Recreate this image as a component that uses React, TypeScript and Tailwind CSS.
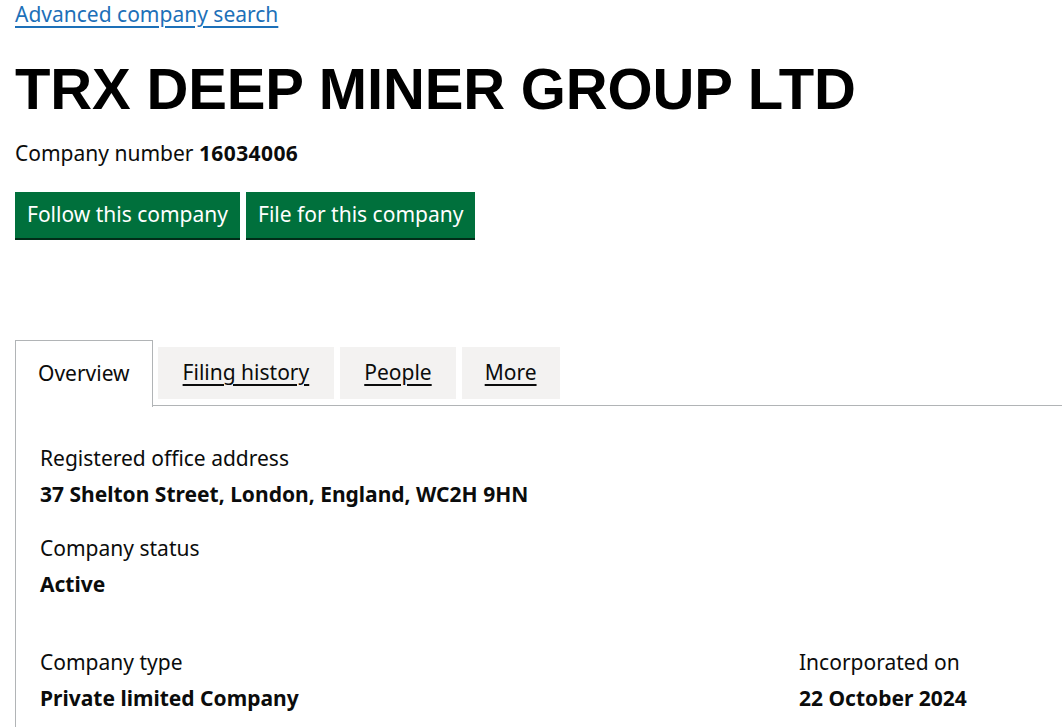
export default function App() {
  return (
    <div className="min-h-screen w-full overflow-hidden bg-white text-[#0b0c0c] font-['Noto_Sans',sans-serif]">
      <div className="pl-[15px]">
        <div className="h-[32px]">
          <a
            href="#"
            className="text-[21px] leading-[28px] text-[#1d70b8] underline decoration-[1.5px] underline-offset-[4px]"
          >
            Advanced company search
          </a>
        </div>
        <h1 className="mt-[22px] font-['Liberation_Sans',Arial,sans-serif] text-[58px] font-bold leading-[70px] tracking-[-0.15px] text-black">
          TRX DEEP MINER GROUP LTD
        </h1>
        <p className="mt-[15px] text-[21px] leading-[28px]">
          Company number <strong className="font-bold tracking-[0.4px]">16034006</strong>
        </p>
        <div className="mt-[25px] flex gap-[6px]">
          <button className="h-[46px] bg-[#00703c] px-[12px] text-[21px] text-white shadow-[0_2px_0_#002d18]">
            Follow this company
          </button>
          <button className="h-[46px] bg-[#00703c] px-[12px] text-[21px] text-white shadow-[0_2px_0_#002d18]">
            File for this company
          </button>
        </div>

        <div className="mt-[102px]">
          <div className="flex items-start">
            <div className="relative z-10 -mb-px flex h-[67px] items-center border border-b-0 border-[#b1b4b6] bg-white px-[22px] text-[21px]">
              Overview
            </div>
            <div className="flex h-[66px] flex-1 items-start gap-[6px] border-b border-[#b1b4b6] pl-[5px] pt-[7px]">
              <a href="#" className="flex h-[52px] items-center bg-[#f3f2f1] px-[25px] text-[21px] text-[#0b0c0c] underline decoration-2 underline-offset-[4px]">
                Filing history
              </a>
              <a href="#" className="flex h-[52px] items-center bg-[#f3f2f1] px-[24px] text-[21px] text-[#0b0c0c] underline decoration-2 underline-offset-[4px]">
                People
              </a>
              <a href="#" className="flex h-[52px] items-center bg-[#f3f2f1] px-[23px] text-[21px] text-[#0b0c0c] underline decoration-2 underline-offset-[4px]">
                More
              </a>
            </div>
          </div>
          <div className="border-l border-[#b1b4b6] pb-[40px] pl-[24px] pt-[38px] text-[21px] leading-[28px]">
            <div>Registered office address</div>
            <div className="mt-[8px] font-bold">37 Shelton Street, London, England, WC2H 9HN</div>
            <div className="mt-[26px]">Company status</div>
            <div className="mt-[8px] font-bold">Active</div>
            <div className="mt-[50px] flex">
              <div className="w-[759px]">
                <div>Company type</div>
                <div className="mt-[8px] font-bold">Private limited Company</div>
              </div>
              <div>
                <div>Incorporated on</div>
                <div className="mt-[8px] font-bold">22 October 2024</div>
              </div>
            </div>
          </div>
        </div>
      </div>
    </div>
  );
}
